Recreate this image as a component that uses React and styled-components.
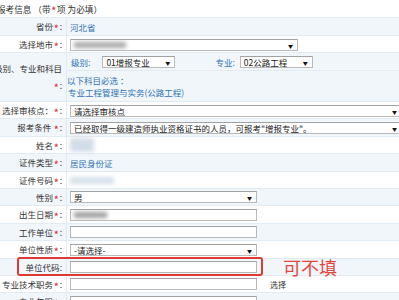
import React from 'react';
import styled, { createGlobalStyle } from 'styled-components';

const GlobalStyle = createGlobalStyle`
  html, body {
    margin: 0;
    padding: 0;
    background: #ffffff;
  }
  body {
    width: 399px;
    height: 300px;
    overflow: hidden;
    font-family: "Noto Sans CJK SC", "Liberation Sans", sans-serif;
    font-size: 8.5px;
    color: #333333;
  }
`;

const Page = styled.div`
  position: relative;
  width: 399px;
  height: 300px;
  overflow: hidden;
`;

const Title = styled.div`
  height: 17px;
  display: flex;
  align-items: center;
  margin-left: -3px;
  font-size: 8.6px;
  color: #333;
  white-space: nowrap;
`;

const Row = styled.div`
  display: grid;
  grid-template-columns: 67px 1fr;
  height: ${(p) => p.$h || 17.4}px;
  box-sizing: border-box;
  background: ${(p) => (p.$alt ? '#f1f6fb' : '#ffffff')};
  border-top: 1px solid #e2eaf2;
`;

const Label = styled.div`
  display: flex;
  flex-direction: column;
  justify-content: center;
  align-items: flex-end;
  padding-right: 4px;
  border-right: 1px solid #e2eaf2;
  white-space: nowrap;
  line-height: 17px;
  color: #333;
`;

const Star = styled.span`
  display: inline-block;
  color: #e3303d;
  font-size: 9px;
  font-weight: bold;
  margin: 0 1px;
  transform: translateY(2px);
`;

const Value = styled.div`
  display: flex;
  flex-direction: ${(p) => (p.$column ? 'column' : 'row')};
  align-items: ${(p) => (p.$column ? 'stretch' : 'center')};
  padding-left: ${(p) => (p.$column ? 0 : 3)}px;
  white-space: nowrap;
  min-width: 0;
`;

const BlueText = styled.span`
  color: #2f73b8;
  margin-left: ${(p) => p.$ml || 0}px;
`;

const Box = styled.div`
  position: relative;
  display: flex;
  align-items: center;
  box-sizing: border-box;
  width: ${(p) => p.$w}px;
  height: ${(p) => p.$hh || 12}px;
  padding-left: 3px;
  background: #fff;
  border: 1px solid #b9b9b9;
  border-top-color: #a2a2a2;
  color: #222;
  font-size: 8.5px;
  overflow: hidden;
  flex-shrink: 0;
`;

const Arrow = styled.span`
  position: absolute;
  right: 4px;
  top: 50%;
  transform: translateY(-50%);
  font-size: 5px;
  color: #111;
`;

const Blur = styled.span`
  display: inline-block;
  width: ${(p) => p.$w}px;
  height: ${(p) => p.$hh}px;
  background: ${(p) => p.$c};
  filter: blur(2px);
  margin-left: ${(p) => p.$ml || 0}px;
`;

const SubRow = styled.div`
  height: 18px;
  display: flex;
  align-items: center;
  padding-left: 3px;
  border-bottom: 1px solid #e2eaf2;
  box-sizing: border-box;
`;

const Line = styled.div`
  line-height: 12px;
  color: #2f73b8;
  padding-left: ${(p) => p.$pl || 0}px;
  margin-top: ${(p) => p.$mt || 0}px;
`;

const SmallText = styled.span`
  margin-left: 13px;
  font-size: 8px;
  color: #333;
`;

const Highlight = styled.div`
  position: absolute;
  left: 17px;
  top: 257px;
  width: 246px;
  height: 19px;
  box-sizing: border-box;
  border: 2px solid #dc3a33;
  border-radius: 3px;
`;

const Note = styled.div`
  position: absolute;
  left: 283px;
  top: 255px;
  font-size: 18px;
  line-height: 24px;
  color: #e4453d;
`;

function Select({ w, children }) {
  return (
    <Box $w={w}>
      {children}
      <Arrow>▼</Arrow>
    </Box>
  );
}

function Field({ label, star = true, alt, h, children }) {
  return (
    <Row $alt={alt} $h={h}>
      <Label>
        <span>
          {label}
          {star && <Star>*</Star>}:
        </span>
      </Label>
      <Value>{children}</Value>
    </Row>
  );
}

export default function App() {
  return (
    <Page>
      <GlobalStyle />
      <Title>
        报考信息 （带<Star>*</Star>项 为必填）
      </Title>
      <Field label="省份" alt h={18}>
        <BlueText>河北省</BlueText>
      </Field>
      <Field label="选择地市" h={17}>
        <Select w={228}>
          <Blur $w={52} $hh={6} $c="#a8a8a8" />
        </Select>
      </Field>
      <Row $alt $h={49}>
        <Label>
          <span>级别、专业和科目</span>
          <span>
            <Star>*</Star>:
          </span>
        </Label>
        <Value $column>
          <SubRow>
            <BlueText $ml={1}>级别:</BlueText>
            <span style={{ width: 12 }} />
            <Select w={73}>01增报专业</Select>
            <BlueText $ml={40}>专业:</BlueText>
            <span style={{ width: 5 }} />
            <Select w={73}>02公路工程</Select>
          </SubRow>
          <Line $mt={3}>以下科目必选 ：</Line>
          <Line $pl={1}>专业工程管理与实务(公路工程)</Line>
        </Value>
      </Row>
      <Field label="选择审核点：" star>
        <Select w={332}>请选择审核点</Select>
      </Field>
      <Field label="报考条件 " alt>
        <Select w={332}>已经取得一级建造师执业资格证书的人员，可报考"增报专业"。</Select>
      </Field>
      <Field label="姓名">
        <Blur $w={24} $hh={14} $c="#d3dde8" />
      </Field>
      <Field label="证件类型" alt>
        <BlueText>居民身份证</BlueText>
      </Field>
      <Field label="证件号码">
        <Blur $w={44} $hh={7} $c="#d6e0ea" />
      </Field>
      <Field label="性别" alt>
        <Select w={187}>男</Select>
      </Field>
      <Field label="出生日期">
        <Box $w={187}>
          <Blur $w={33} $hh={6} $c="#9e9e9e" />
        </Box>
      </Field>
      <Field label="工作单位" alt>
        <Box $w={187} />
      </Field>
      <Field label="单位性质">
        <Select w={187}>-请选择-</Select>
      </Field>
      <Field label="单位代码" star={false} alt>
        <Box $w={187} />
      </Field>
      <Field label="专业技术职务">
        <Box $w={187} />
        <SmallText>选择</SmallText>
      </Field>
      <Field label="专业年限" alt>
        <Box $w={187} />
      </Field>
      <Highlight />
      <Note>可不填</Note>
    </Page>
  );
}
